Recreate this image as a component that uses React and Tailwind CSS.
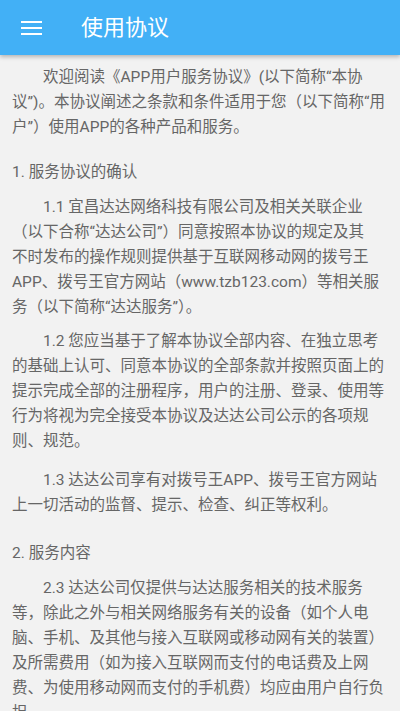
/**
 * AgreementScreen — 使用协议 page with app bar and agreement text.
 * Lines are split as the device's line breaker laid them out.
 */

const blocks = [
  {
    gap: 'mt-0',
    indent: true,
    lines: [
      '欢迎阅读《APP用户服务协议》(以下简称“本协',
      '议”)。本协议阐述之条款和条件适用于您（以下简称“用',
      '户”）使用APP的各种产品和服务。',
    ],
  },
  { gap: 'mt-[20px]', lines: ['1. 服务协议的确认'] },
  {
    gap: 'mt-[10px]',
    indent: true,
    lines: [
      '1.1 宜昌达达网络科技有限公司及相关关联企业',
      '（以下合称“达达公司”）同意按照本协议的规定及其',
      '不时发布的操作规则提供基于互联网移动网的拨号王',
      'APP、拨号王官方网站（www.tzb123.com）等相关服',
      '务（以下简称“达达服务”）。',
    ],
  },
  {
    gap: 'mt-[9px]',
    indent: true,
    lines: [
      '1.2 您应当基于了解本协议全部内容、在独立思考',
      '的基础上认可、同意本协议的全部条款并按照页面上的',
      '提示完成全部的注册程序，用户的注册、登录、使用等',
      '行为将视为完全接受本协议及达达公司公示的各项规',
      '则、规范。',
    ],
  },
  {
    gap: 'mt-[14px]',
    indent: true,
    lines: [
      '1.3 达达公司享有对拨号王APP、拨号王官方网站',
      '上一切活动的监督、提示、检查、纠正等权利。',
    ],
  },
  { gap: 'mt-[23px]', lines: ['2. 服务内容'] },
  {
    gap: 'mt-[10px]',
    indent: true,
    lines: [
      '2.3 达达公司仅提供与达达服务相关的技术服务',
      '等，除此之外与相关网络服务有关的设备（如个人电',
      '脑、手机、及其他与接入互联网或移动网有关的装置）',
      '及所需费用（如为接入互联网而支付的电话费及上网',
      '费、为使用移动网而支付的手机费）均应由用户自行负',
      '担。',
    ],
  },
];

export default function App() {
  return (
    <div
      className="h-[711px] w-[400px] overflow-hidden bg-[#f2f2f2]"
      style={{ fontFamily: 'Roboto, "Noto Sans CJK SC", sans-serif' }}
    >
      <header className="relative z-10 flex h-[55px] items-center bg-[#42b0f6] shadow-[0_2px_4px_rgba(0,0,0,0.25)]">
        <div className="ml-[21px] flex w-[21px] flex-col gap-[4px]">
          <span className="block h-[2px] bg-white" />
          <span className="block h-[2px] bg-white" />
          <span className="block h-[2px] bg-white" />
        </div>
        <h1 className="ml-[39px] text-[22px] text-white">使用协议</h1>
      </header>

      <div className="px-[12px] pt-[10px] text-[15.5px] leading-[25px] text-[#666]">
        {blocks.map((b, i) => (
          <div key={i} className={b.gap}>
            {b.lines.map((line, j) => (
              <div
                key={j}
                className={`whitespace-nowrap ${b.indent && j === 0 ? 'pl-[31px]' : ''}`}
              >
                {line}
              </div>
            ))}
          </div>
        ))}
      </div>
    </div>
  );
}
